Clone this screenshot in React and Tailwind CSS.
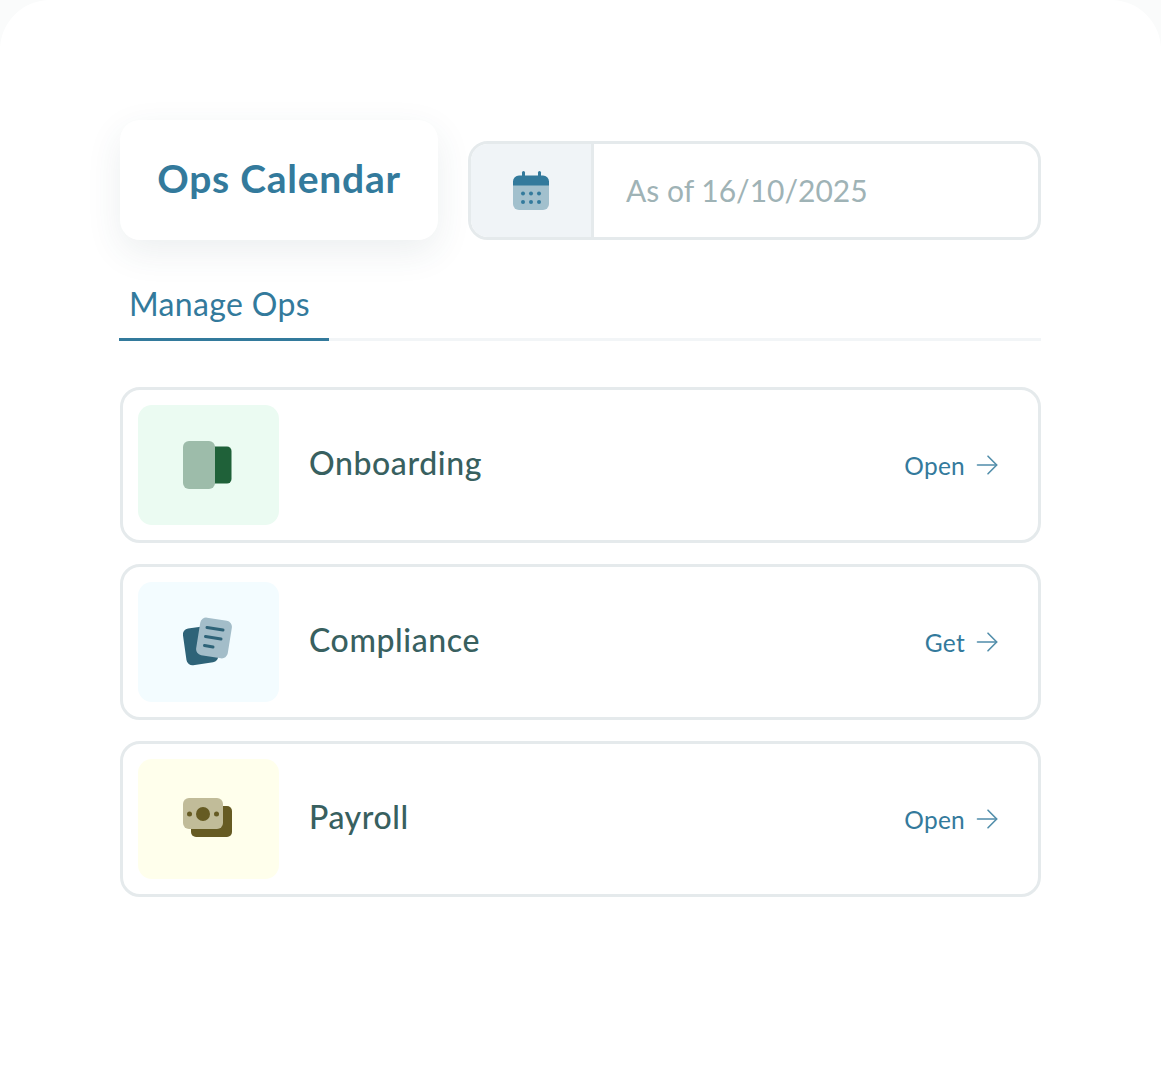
const font = { fontFamily: '"Lato", "Noto Sans", sans-serif' };

function Arrow() {
  return (
    <svg width="22" height="20" viewBox="0 0 22 20" fill="none" stroke="#337a9c" strokeWidth="1.6" strokeLinecap="round" strokeLinejoin="round" className="opacity-85">
      <path d="M1.5 10H20.5" />
      <path d="M12 1.2L20.7 10L12 18.8" />
    </svg>
  );
}

function DoorIcon() {
  return (
    <svg width="49" height="48" viewBox="0 0 49 48">
      <rect x="24" y="5.5" width="24.5" height="37" rx="4.5" fill="#1f6139" />
      <rect x="0" y="0" width="32" height="48" rx="6" fill="#9dbcaa" />
    </svg>
  );
}

function DocsIcon() {
  return (
    <svg width="50" height="50" viewBox="0 0 50 50">
      <rect x="1.5" y="10" width="32" height="37" rx="6" fill="#2e6378" transform="rotate(-8 17 28)" />
      <rect x="15" y="2" width="32" height="38" rx="6" fill="#a3bdc9" transform="rotate(9 31 21)" />
      <g stroke="#2e6378" strokeWidth="3" strokeLinecap="round">
        <path d="M24 10.5L40 13" />
        <path d="M22.5 19.5L38 22" />
        <path d="M21.5 28.5L30 30" />
      </g>
    </svg>
  );
}

function MoneyIcon() {
  return (
    <svg width="49" height="40" viewBox="0 0 49 40" className="mb-[2px]">
      <rect x="8" y="8" width="41" height="31" rx="5" fill="#665b23" />
      <rect x="0" y="0" width="40" height="31" rx="6" fill="#c1bc99" />
      <circle cx="20" cy="16" r="7" fill="#665b23" />
      <circle cx="6.5" cy="16" r="2.5" fill="#665b23" />
      <circle cx="33.5" cy="16" r="2.5" fill="#665b23" />
    </svg>
  );
}

function CalendarIcon() {
  return (
    <svg width="36" height="40" viewBox="0 0 36 40">
      <path d="M0 14H36V33a6 6 0 0 1-6 6H6a6 6 0 0 1-6-6Z" fill="#a2c0cd" />
      <path d="M0 14V10.500a6 6 0 0 1 6-6H30a6 6 0 0 1 6 6V14.500H0Z" fill="#337a9c" />
      <rect x="9" y="0" width="3" height="7" rx="1.500" fill="#337a9c" />
      <rect x="25" y="0" width="3" height="7" rx="1.500" fill="#337a9c" />
      <g fill="#337a9c">
        <circle cx="10" cy="22.500" r="2" />
        <circle cx="18" cy="22.500" r="2" />
        <circle cx="26" cy="22.500" r="2" />
        <circle cx="10" cy="31" r="2" />
        <circle cx="18" cy="31" r="2" />
        <circle cx="26" cy="31" r="2" />
      </g>
    </svg>
  );
}

function Row({ bg, icon, title, action }) {
  return (
    <div className="flex h-[155.67px] items-center rounded-[20px] border-[3px] border-[#e5eaec] bg-white pl-[15px] pr-[40px]">
      <div className={`flex h-[120px] w-[141px] shrink-0 items-center justify-center rounded-[14px] pr-[2px] ${bg}`}>{icon}</div>
      <div className="ml-[30px] flex-1 pb-[3px] text-[32px] leading-[40px] font-medium tracking-[0.6px] text-[#38605f]">{title}</div>
      <div className="flex items-center gap-[11px] text-[24.500px] leading-[32px] tracking-[0.25px] text-[#337a9c]">
        <span className="mt-[2px]">{action}</span>
        <Arrow />
      </div>
    </div>
  );
}

export default function App() {
  return (
    <div className="h-[1065px] w-full overflow-hidden bg-[#fafbfb]" style={font}>
      <div className="h-full rounded-t-[50px] bg-white px-[120px] pt-[120px]">
        <div className="flex items-end gap-[30px]">
          <div className="flex h-[120px] w-[318px] items-center justify-center rounded-[20px] bg-white pb-[3px] text-[39px] font-bold tracking-[0.75px] text-[#337a9c] shadow-[0_12px_36px_rgba(40,80,90,0.09)]">
            Ops Calendar
          </div>
          <div className="flex h-[99px] flex-1 overflow-hidden rounded-[20px] border-[3px] border-[#e5eaec]">
            <div className="flex w-[123px] items-center justify-center border-r-[3px] border-[#e5eaec] bg-[#f0f4f7]">
              <CalendarIcon />
            </div>
            <div className="flex flex-1 items-center pl-[32px] text-[30px] text-[#9fb3b6]">As of 16/10/2025</div>
          </div>
        </div>
        <div className="mt-[40px] flex border-b-[3px] border-[#f2f5f7]">
          <div className="-mb-[3px] -ml-px w-[210px] border-b-[3px] border-[#337a9c] pt-[1px] pb-[12px] pl-[10px] text-[32px] leading-[45px] tracking-[0.35px] text-[#337a9c]">
            Manage Ops
          </div>
        </div>
        <div className="mt-[46px] flex flex-col gap-[21.33px]">
          <Row bg="bg-[#ebfbf2]" icon={<DoorIcon />} title="Onboarding" action="Open" />
          <Row bg="bg-[#f3fcff]" icon={<DocsIcon />} title="Compliance" action="Get" />
          <Row bg="bg-[#ffffec]" icon={<MoneyIcon />} title="Payroll" action="Open" />
        </div>
      </div>
    </div>
  );
}
